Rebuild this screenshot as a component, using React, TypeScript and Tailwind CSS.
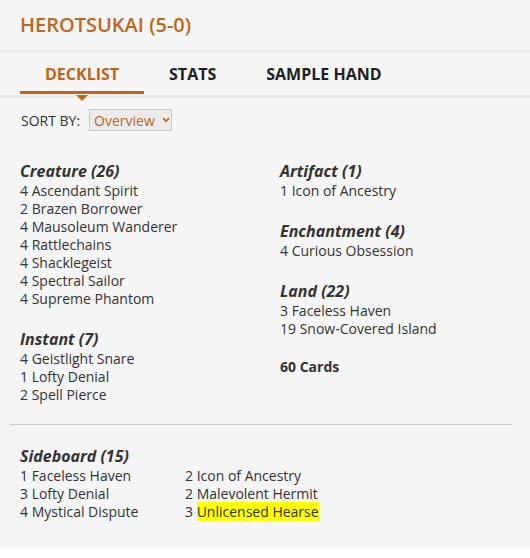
import React from "react";

interface Section {
  title: string;
  cards: string[];
}

const leftSections: Section[] = [
  {
    title: "Creature (26)",
    cards: [
      "4 Ascendant Spirit",
      "2 Brazen Borrower",
      "4 Mausoleum Wanderer",
      "4 Rattlechains",
      "4 Shacklegeist",
      "4 Spectral Sailor",
      "4 Supreme Phantom",
    ],
  },
  {
    title: "Instant (7)",
    cards: ["4 Geistlight Snare", "1 Lofty Denial", "2 Spell Pierce"],
  },
];

const rightSections: Section[] = [
  { title: "Artifact (1)", cards: ["1 Icon of Ancestry"] },
  { title: "Enchantment (4)", cards: ["4 Curious Obsession"] },
  { title: "Land (22)", cards: ["3 Faceless Haven", "19 Snow-Covered Island"] },
];

const tabs = ["DECKLIST", "STATS", "SAMPLE HAND"];

const DeckSection: React.FC<{ section: Section }> = ({ section }) => (
  <div className="mb-5">
    <h3 className="text-[16px] leading-[22px] font-bold italic text-[#333]">
      {section.title}
    </h3>
    {section.cards.map((card) => (
      <div key={card} className="text-[14px] leading-[18px] text-[#333]">
        {card}
      </div>
    ))}
  </div>
);

const App: React.FC = () => {
  return (
    <div
      className="w-[530px] bg-[#f5f5f5] pb-7"
      style={{ fontFamily: '"Open Sans", "Liberation Sans", sans-serif' }}
    >
      <div className="h-[50px] px-5 flex items-center">
        <h1 className="text-[20px] font-semibold text-[#c0651a]">
          HEROTSUKAI (5-0)
        </h1>
      </div>

      <div className="h-[3px] bg-[#e9e9e9]" />

      <div className="h-[42px] px-5 flex">
        {tabs.map((tab, i) => (
          <div key={tab} className="relative px-[25px] flex items-center">
            <span
              className={
                i === 0
                  ? "text-[16px] font-bold text-[#c0651a]"
                  : "text-[16px] font-bold text-[#1e1e1e]"
              }
            >
              {tab}
            </span>
            {i === 0 && (
              <>
                <div className="absolute left-0 right-0 bottom-[1px] h-[3px] bg-[#c0651a]" />
                <div className="absolute left-1/2 -translate-x-1/2 bottom-[-6px] w-0 h-0 border-l-[6px] border-r-[6px] border-t-[6px] border-l-transparent border-r-transparent border-t-[#c0651a] z-10" />
              </>
            )}
          </div>
        ))}
      </div>

      <div className="h-[3px] bg-[#e9e9e9]" />

      <div className="mt-[11px] px-5 flex items-center gap-[9px]">
        <span className="text-[14px] text-[#333] pl-[1px]">SORT BY:</span>
        <div className="w-[83px] h-[22px] bg-[#ebebeb] border border-[#c8c8c8] flex items-center pl-[4px] gap-[7px]">
          <span className="text-[14px] text-[#c0651a]">Overview</span>
          <svg width="8" height="6" viewBox="0 0 8 6">
            <path
              d="M1 1.2 L4 4.2 L7 1.2"
              fill="none"
              stroke="#c0651a"
              strokeWidth="1.8"
            />
          </svg>
        </div>
      </div>

      <div className="mt-[29px] px-5 grid grid-cols-[260px_1fr]">
        <div>
          {leftSections.map((s) => (
            <DeckSection key={s.title} section={s} />
          ))}
        </div>
        <div>
          {rightSections.map((s) => (
            <DeckSection key={s.title} section={s} />
          ))}
          <div className="text-[14px] leading-[18px] font-bold text-[#333]">
            60 Cards
          </div>
        </div>
      </div>

      <div className="ml-[10px] mr-[18px] h-px bg-[#cccccc]" />

      <div className="pt-5 px-5">
        <h3 className="text-[16px] leading-[22px] font-bold italic text-[#333]">
          Sideboard (15)
        </h3>
        <div className="grid grid-cols-[165px_1fr] text-[14px] leading-[18px] text-[#333]">
          <div>
            <div>1 Faceless Haven</div>
            <div>3 Lofty Denial</div>
            <div>4 Mystical Dispute</div>
          </div>
          <div>
            <div>2 Icon of Ancestry</div>
            <div>2 Malevolent Hermit</div>
            <div>
              3 <span className="bg-[#ffff00]">Unlicensed Hearse</span>
            </div>
          </div>
        </div>
      </div>
    </div>
  );
};

export default App;
